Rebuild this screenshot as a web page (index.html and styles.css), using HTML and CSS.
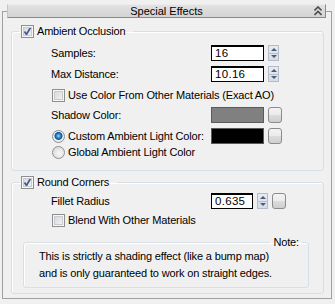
FILE: index.html
```html
<!doctype html>
<html>
    <head>
        <title>Special Effects</title>
        <link rel="stylesheet" href="styles.css">
    </head>
    <body>
        <fieldset class="rollout">
            <legend class="rollout-title">
                <span class="title-text">Special Effects</span>
                <svg class="collapse" width="8" height="10" viewBox="0 0 8 10">
                    <path d="M0.5 4.5 L4 1 L7.5 4.5" fill="none" stroke="#4d4d4d" stroke-width="1.6"/>
                    <path d="M0.5 9 L4 5.5 L7.5 9" fill="none" stroke="#4d4d4d" stroke-width="1.6"/>
                </svg>
            </legend>

            <fieldset class="group group-ao">
                <legend><span class="check on"></span>Ambient Occlusion</legend>

                <div class="row row-first">
                    <span class="label">Samples:</span>
                    <span class="field">16</span>
                    <span class="spin"></span>
                </div>
                <div class="row row-gap">
                    <span class="label">Max Distance:</span>
                    <span class="field">10.16</span>
                    <span class="spin"></span>
                </div>
                <div class="row row-gap opt">
                    <span class="check"></span>Use Color From Other Materials (Exact AO)
                </div>
                <div class="row row-gap4">
                    <span class="label">Shadow Color:</span>
                    <span class="swatch gray"></span>
                    <span class="pick"></span>
                </div>
                <div class="row row-gap opt">
                    <span class="radio on"></span><span class="label-r">Custom Ambient Light Color:</span>
                    <span class="swatch black"></span>
                    <span class="pick"></span>
                </div>
                <div class="row opt">
                    <span class="radio"></span>Global Ambient Light Color
                </div>
            </fieldset>

            <fieldset class="group group-rc">
                <legend><span class="check on"></span>Round Corners</legend>

                <div class="row row-fillet">
                    <span class="label">Fillet Radius</span>
                    <span class="field short">0.635</span>
                    <span class="spin"></span>
                    <span class="pick"></span>
                </div>
                <div class="row row-blend opt">
                    <span class="check"></span>Blend With Other Materials
                </div>

                <fieldset class="note">
                    <legend>Note:</legend>
                    <p>This is strictly a shading effect (like a bump map)<br>and is only guaranteed to work on straight edges.</p>
                </fieldset>
            </fieldset>
        </fieldset>
    </body>
</html>
```

FILE: styles.css
```css
* {
    font-family: "Liberation Sans", Arial, sans-serif;
    box-sizing: border-box;
}

body {
    background: #f0f0f0;
    margin: 0;
    padding: 4px 3px 0 2px;
    font-size: 11px;
    letter-spacing: -0.15px;
    color: #000;
}

fieldset {
    margin: 0;
    padding: 0;
    min-width: 0;
}

legend {
    padding: 0;
}

.rollout {
    width: 330px;
    border: 1px solid #a0a0a0;
    padding-bottom: 4px;
}

.rollout-title {
    width: 319px;
    height: 14px;
    margin-left: 4px;
    display: grid;
    grid-template-columns: 1fr auto 1fr;
    align-items: center;
    background: linear-gradient(#e2e2e2, #d3d3d3);
    border: 1px solid;
    border-color: #ececec #8a8a8a #8a8a8a #c4c4c4;
    line-height: 12px;
}

.title-text {
    grid-column: 2;
    letter-spacing: 0;
}

.collapse {
    grid-column: 3;
    justify-self: end;
    margin-right: 3px;
}

.group {
    width: 313px;
    margin: 6px 0 0 8px;
    border: 1px solid #d5dfe5;
    border-radius: 3px;
    box-shadow: inset 1px 1px #fff;
    padding-bottom: 10px;
}

.group > legend {
    display: flex;
    align-items: center;
    height: 14px;
    margin-left: 7px;
    padding: 0 8px 0 2px;
    letter-spacing: -0.2px;
}

.group-rc {
    margin-top: 4px;
    padding-bottom: 5px;
}

.row {
    display: flex;
    align-items: center;
    height: 16px;
    padding-left: 39px;
}

.row-first {
    margin-top: 7px;
}

.row-fillet {
    margin-top: 4px;
}

.row-gap {
    margin-top: 5px;
}

.row-gap4 {
    margin-top: 4px;
}

.row-blend {
    margin-top: 3px;
}

.opt {
    padding-left: 40px;
}

.label {
    width: 160px;
}

.label-r {
    width: 143px;
}

.field {
    width: 53px;
    height: 16px;
    background: #fff;
    border: 1px solid #000;
    border-top-width: 2px;
    padding: 0 0 0 3px;
    line-height: 13px;
    font-size: 11.5px;
    letter-spacing: 0.3px;
}

.field.short {
    width: 42px;
}

.spin {
    width: 11px;
    height: 16px;
    margin-left: 4px;
    background:
        linear-gradient(#b7bfcc, #b7bfcc) 0 7px / 100% 1px no-repeat,
        linear-gradient(#e6ebf2, #d7dde8);
    border: 1px solid #b4bcc8;
    position: relative;
}

.spin::before,
.spin::after {
    content: "";
    position: absolute;
    left: 2px;
    border-left: 3px solid transparent;
    border-right: 3px solid transparent;
}

.spin::before {
    top: 2px;
    border-bottom: 3px solid #4c5a7c;
}

.spin::after {
    bottom: 2px;
    border-top: 3px solid #4c5a7c;
}

.swatch {
    width: 53px;
    height: 16px;
    border: 1px solid #5a5a5a;
}

.gray {
    background: #808080;
}

.black {
    background: #000;
}

.pick {
    width: 14px;
    height: 16px;
    margin-left: 4px;
    border: 1px solid #8b8b8b;
    border-radius: 3px;
    background: linear-gradient(#f3f3f3, #ebebeb 50%, #dcdcdc 50%, #cfcfcf);
}

.check {
    display: inline-block;
    flex: none;
    width: 13px;
    height: 13px;
    margin-right: 3px;
    border: 1px solid #8e8f8f;
    box-shadow: inset 0 0 0 1px #f6f6f6, inset 0 0 0 2px #c9cbcf;
    background: linear-gradient(135deg, #d0d3d8, #f7f7f7);
}

.check.on {
    background:
        url("data:image/svg+xml,%3Csvg xmlns='http://www.w3.org/2000/svg' width='11' height='11'%3E%3Cpath d='M2.5 5.5 L4.5 8.5 L8.5 1.5' fill='none' stroke='%23435894' stroke-width='1.7'/%3E%3C/svg%3E") 0 0 no-repeat,
        linear-gradient(135deg, #d0d3d8, #f7f7f7);
}

.radio {
    display: inline-block;
    flex: none;
    width: 13px;
    height: 13px;
    margin-right: 3px;
    border: 1px solid #8e8f8f;
    border-radius: 50%;
    background: radial-gradient(circle at 60% 60%, #f8f8f8, #d2d2d2);
}

.radio.on {
    background: radial-gradient(circle at 50% 45%, #9ee0ff 0, #2a8ad0 2px, #17508e 3.5px, #f4f4f4 4.5px, #d8d8d8 7px);
}

.note {
    width: 286px;
    margin: 7px 0 0 11px;
    border: 1px solid #d5dfe5;
    border-radius: 3px;
    box-shadow: inset 1px 1px #fff;
    padding: 0 0 5px 15px;
}

.note legend {
    margin-left: auto;
    margin-right: 6px;
    padding: 0 3px;
    height: 14px;
    line-height: 14px;
}

.note p {
    margin: -1px 0 0 0;
    line-height: 17px;
}
```
